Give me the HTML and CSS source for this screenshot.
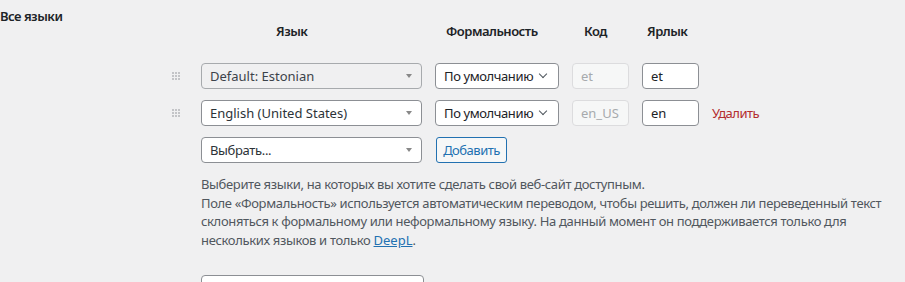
FILE: index.html
```html
<!DOCTYPE html>
<html lang="ru">
<head>
    <meta charset="UTF-8">
    <meta name="viewport" content="width=device-width, initial-scale=1.0">
    <title>Все языки</title>
    <link rel="stylesheet" href="styles.css">
</head>
<body>
    <div class="settings-row">
        <div class="settings-label">Все языки</div>
        <div class="settings-field">
            <div class="lang-table">
                <div class="col-head head-lang">Язык</div>
                <div class="col-head head-formal">Формальность</div>
                <div class="col-head head-code">Код</div>
                <div class="col-head head-slug">Ярлык</div>
                <div></div>

                <div class="handle"><span></span></div>
                <div class="fake-select latin disabled">Default: Estonian<i class="tri"></i></div>
                <div class="native-select">По умолчанию<i class="chev"></i></div>
                <div class="text-input latin disabled">et</div>
                <div class="text-input latin">et</div>
                <div></div>

                <div class="handle"><span></span></div>
                <div class="fake-select latin">English (United States)<i class="tri"></i></div>
                <div class="native-select">По умолчанию<i class="chev"></i></div>
                <div class="text-input latin disabled">en_US</div>
                <div class="text-input latin">en</div>
                <a class="remove-link" href="#">Удалить</a>

                <div></div>
                <div class="fake-select">Выбрать...<i class="tri"></i></div>
                <div><button class="add-btn">Добавить</button></div>
            </div>

            <p class="description">
                Выберите языки, на которых вы хотите сделать свой веб-сайт доступным.<br>
                Поле «Формальность» используется автоматическим переводом, чтобы решить, должен ли переведенный текст<br>
                склоняться к формальному или неформальному языку. На данный момент он поддерживается только для<br>
                нескольких языков и только <a href="#">DeepL</a>.
            </p>

            <div class="next-select"></div>
        </div>
    </div>
</body>
</html>
```

FILE: styles.css
```css
body {
    margin: 0;
    background: #f0f0f1;
    color: #1d2327;
    font-family: "Noto Sans", "Open Sans", sans-serif;
    font-size: 13px;
    letter-spacing: -0.35px;
    overflow: hidden;
}
.settings-row {
    display: flex;
    padding-top: 6px;
}
.settings-label {
    width: 160px;
    flex-shrink: 0;
    font-weight: 600;
    letter-spacing: -0.5px;
    line-height: 20px;
}
.settings-field {
    flex: 1;
}
.lang-table {
    display: grid;
    grid-template-columns: 28px 221px 124px 57px 57px auto;
    column-gap: 13px;
    row-gap: 11px;
    align-items: center;
    margin-top: 15px;
}
.col-head {
    font-weight: 600;
    letter-spacing: -0.5px;
    line-height: 20px;
    margin-bottom: 11px;
    white-space: nowrap;
}
.head-lang {
    grid-column: 1 / 3;
    padding-left: 116px;
}
.head-formal {
    padding-left: 11px;
}
.head-code {
    padding-left: 12px;
}
.head-slug {
    padding-left: 5px;
}
.handle {
    height: 26px;
    display: flex;
    align-items: center;
    padding-left: 12px;
}
.handle span {
    width: 2px;
    height: 2px;
    margin-top: -6px;
    background: #c3c4c7;
    box-shadow: 3px 0 #c3c4c7, 6px 0 #c3c4c7,
        0 3px #c3c4c7, 3px 3px #c3c4c7, 6px 3px #c3c4c7,
        0 6px #c3c4c7, 3px 6px #c3c4c7, 6px 6px #c3c4c7;
}
.fake-select,
.native-select,
.text-input {
    position: relative;
    box-sizing: border-box;
    height: 26px;
    line-height: 24px;
    border: 1px solid #8c8f94;
    border-radius: 4px;
    background: #fff;
    padding: 0 8px;
    color: #2c3338;
    white-space: nowrap;
}
.latin {
    letter-spacing: 0;
}
.fake-select.disabled {
    background: #f0f0f1;
    border-color: #a7aaad;
    color: #3c434a;
}
.tri {
    position: absolute;
    right: 9px;
    top: 10px;
    border-left: 3.5px solid transparent;
    border-right: 3.5px solid transparent;
    border-top: 4px solid #888;
}
.native-select {
    color: #1d2327;
    letter-spacing: -0.4px;
}
.chev {
    position: absolute;
    right: 12px;
    top: 7px;
    width: 5px;
    height: 5px;
    border-right: 1.6px solid #50575e;
    border-bottom: 1.6px solid #50575e;
    transform: rotate(45deg);
}
.text-input {
    color: #1d2327;
}
.text-input.disabled {
    background: #f6f7f7;
    border-color: #dcdcde;
    color: #a7aaad;
}
.remove-link {
    color: #b32d2e;
    text-decoration: none;
    letter-spacing: -0.5px;
}
.add-btn {
    box-sizing: border-box;
    height: 26px;
    width: 71px;
    padding: 0;
    margin-left: 1px;
    font-family: inherit;
    font-size: 13px;
    letter-spacing: -0.5px;
    color: #2271b1;
    background: #f6f7f7;
    border: 1px solid #2271b1;
    border-radius: 3px;
}
.description {
    margin: 12px 0 0 41px;
    color: #50575e;
    line-height: 18.6px;
    white-space: nowrap;
}
.description a {
    color: #2271b1;
    letter-spacing: 0;
}
.next-select {
    width: 223px;
    height: 26px;
    margin: 26px 0 0 41px;
    box-sizing: border-box;
    border: 1px solid #8c8f94;
    border-radius: 4px;
    background: #fff;
}
```
